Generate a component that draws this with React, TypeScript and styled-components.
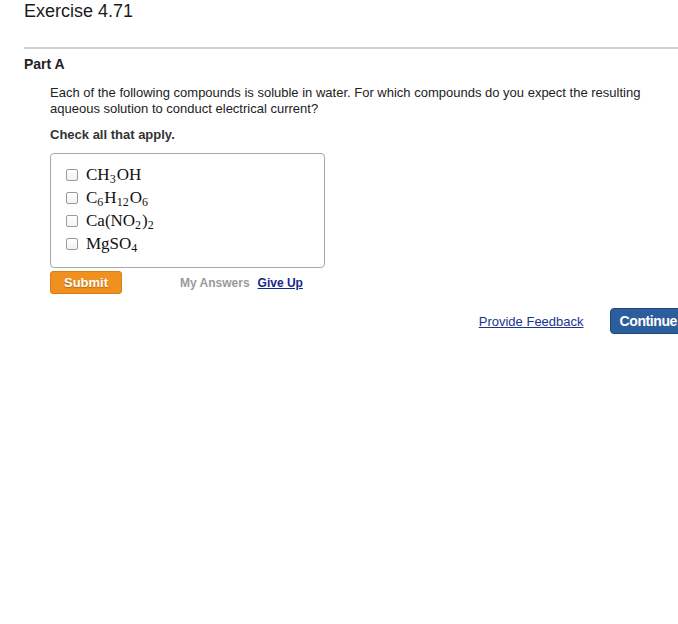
import styled, { createGlobalStyle } from 'styled-components';

const GlobalStyle = createGlobalStyle`
  html, body {
    margin: 0;
    padding: 0;
    background: #fff;
    overflow: hidden;
  }
  body {
    font-family: "Liberation Sans", Arial, sans-serif;
    color: #222;
  }
`;

type Formula = { id: string; parts: (string | { sub: string })[] };

const compounds: Formula[] = [
  { id: 'ch3oh', parts: ['CH', { sub: '3' }, 'OH'] },
  { id: 'c6h12o6', parts: ['C', { sub: '6' }, 'H', { sub: '12' }, 'O', { sub: '6' }] },
  { id: 'cano22', parts: ['Ca(NO', { sub: '2' }, ')', { sub: '2' }] },
  { id: 'mgso4', parts: ['MgSO', { sub: '4' }] },
];

export default function App() {
  return (
    <Page>
      <GlobalStyle />
      <Title>Exercise 4.71</Title>
      <Divider />
      <PartTitle>Part A</PartTitle>
      <Body>
        <Question>
          Each of the following compounds is soluble in water. For which compounds do you expect the resulting
          aqueous solution to conduct electrical current?
        </Question>
        <Instruction>Check all that apply.</Instruction>
        <ChoiceBox>
          {compounds.map((c) => (
            <Choice key={c.id}>
              <Check type="checkbox" />
              <Chem>
                {c.parts.map((p, i) =>
                  typeof p === 'string' ? <span key={i}>{p}</span> : <Sub key={i}>{p.sub}</Sub>
                )}
              </Chem>
            </Choice>
          ))}
        </ChoiceBox>
        <Actions>
          <SubmitButton>Submit</SubmitButton>
          <Links>
            <MutedLink>My Answers</MutedLink>
            <GiveUp href="#">Give Up</GiveUp>
          </Links>
        </Actions>
      </Body>
      <Footer>
        <FeedbackLink href="#">Provide Feedback</FeedbackLink>
        <ContinueButton>Continue</ContinueButton>
      </Footer>
    </Page>
  );
}

const Page = styled.div`
  width: 654px;
  padding: 0 0 40px 24px;
`;

const Title = styled.h1`
  margin: 0;
  padding-top: 1px;
  font-size: 18px;
  font-weight: 400;
  line-height: 21px;
  color: #1a1a1a;
`;

const Divider = styled.hr`
  margin: 25px 0 0;
  border: 0;
  border-top: 2px solid #cfcfcf;
  width: 680px;
`;

const PartTitle = styled.h2`
  margin: 7px 0 0;
  font-size: 14px;
  font-weight: 700;
  line-height: 17px;
  color: #222;
`;

const Body = styled.div`
  padding-left: 26px;
`;

const Question = styled.p`
  margin: 12px 0 0;
  width: 600px;
  font-size: 13px;
  line-height: 16px;
  color: #222;
`;

const Instruction = styled.p`
  margin: 10px 0 0;
  font-size: 13px;
  font-weight: 700;
  line-height: 16px;
  color: #333;
`;

const ChoiceBox = styled.div`
  margin-top: 10px;
  box-sizing: border-box;
  width: 275px;
  height: 115px;
  border: 1px solid #a8a8a8;
  border-radius: 4px;
  padding: 9px 15px 0;
  display: flex;
  flex-direction: column;
`;

const Choice = styled.label`
  display: flex;
  align-items: center;
  height: 23px;
  gap: 8px;
`;

const Check = styled.input`
  appearance: none;
  margin: 0;
  width: 12px;
  height: 12px;
  border: 1px solid #9a9a9a;
  border-radius: 2px;
  background: linear-gradient(#fff, #f2f2f2);
  flex: none;
`;

const Chem = styled.span`
  font-family: "Liberation Serif", "Times New Roman", serif;
  font-size: 17px;
  color: #111;
  white-space: nowrap;
`;

const Sub = styled.sub`
  font-size: 12px;
  vertical-align: -3px;
  margin: 0 1px 0 0;
  line-height: 0;
`;

const Actions = styled.div`
  margin-top: 3px;
  display: flex;
  align-items: center;
  gap: 58px;
`;

const SubmitButton = styled.button`
  width: 72px;
  height: 23px;
  border: 1px solid #d77c16;
  border-radius: 3px;
  background: #f0901e;
  color: #fff;
  font-family: "Liberation Sans", Arial, sans-serif;
  font-size: 13px;
  font-weight: 700;
  text-shadow: 0 1px 1px rgba(120, 60, 0, 0.5);
  padding: 0;
  cursor: pointer;
`;

const Links = styled.div`
  display: flex;
  gap: 8px;
  font-size: 12px;
  font-weight: 700;
`;

const MutedLink = styled.span`
  color: #9a9a9a;
`;

const GiveUp = styled.a`
  color: #17288a;
  text-decoration: underline;
`;

const Footer = styled.div`
  margin-top: 14px;
  display: flex;
  justify-content: flex-end;
  align-items: center;
  gap: 26px;
  width: 664px;
`;

const FeedbackLink = styled.a`
  font-size: 13px;
  color: #1d3592;
  text-decoration: underline;
  margin-top: 1px;
`;

const ContinueButton = styled.button`
  height: 26px;
  padding: 0 10px 1px 9px;
  border: 1px solid #1d477d;
  border-radius: 4px;
  background: #2c5d9c;
  color: #fff;
  font-family: "Liberation Sans", Arial, sans-serif;
  font-size: 14px;
  font-weight: 700;
  letter-spacing: -0.4px;
  cursor: pointer;
`;
